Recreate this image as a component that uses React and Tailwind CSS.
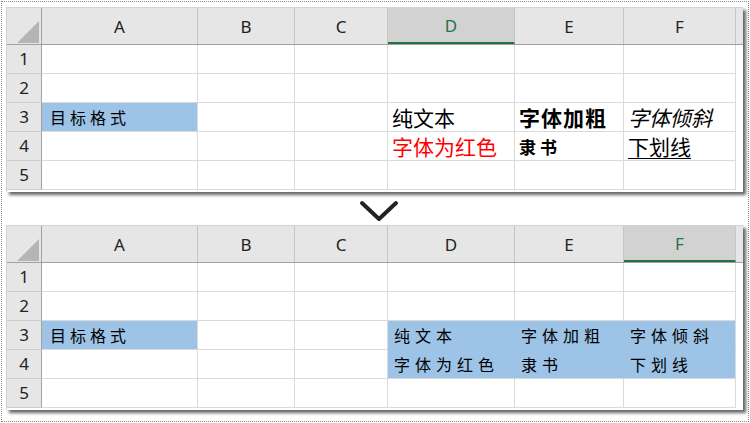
import React from "react";

const COLS = ["A", "B", "C", "D", "E", "F"];
const ROWS = [1, 2, 3, 4, 5];
const GRID = "grid grid-cols-[35px_156px_97px_93px_127px_109px_112px_1fr]";
const CJK = { fontFamily: '"Noto Sans CJK SC", sans-serif' };
const HEAD = { fontFamily: '"Noto Sans", "Liberation Sans", sans-serif' };

const beforeCells = {
  A3: { text: "目标格式", fill: true, cls: "pl-[8px] text-[16px] tracking-[4px] text-black" },
  D3: { text: "纯文本", cls: "pl-[4px] text-[21px] text-black" },
  D4: { text: "字体为红色", cls: "pl-[4px] text-[21px] text-[#ff0000]" },
  E3: { text: "字体加粗", cls: "pl-[4px] text-[21px] font-bold tracking-[1px] text-black" },
  E4: { text: "隶书", cls: "pl-[4px] text-[17px] font-semibold tracking-[4px] text-black" },
  F3: { text: "字体倾斜", cls: "pl-[4px] text-[21px] italic text-black" },
  F4: {
    text: "下划线",
    cls: "pl-[4px] text-[21px] text-black underline underline-offset-[3px] decoration-1",
  },
};

const kai = "pl-[6px] text-[16px] tracking-[5px] text-black";
const afterCells = {
  A3: { text: "目标格式", fill: true, cls: "pl-[8px] text-[16px] tracking-[4px] text-black" },
  D3: { text: "纯文本", fill: true, cls: kai },
  D4: { text: "字体为红色", fill: true, cls: kai },
  E3: { text: "字体加粗", fill: true, cls: kai },
  E4: { text: "隶书", fill: true, cls: kai },
  F3: { text: "字体倾斜", fill: true, cls: kai },
  F4: { text: "下划线", fill: true, cls: kai },
};

function Corner() {
  return (
    <div className="h-full bg-[#e6e6e6] border-r border-[#a3a3a3] flex items-end justify-end pr-[2px] pb-[1px]">
      <svg width="22" height="22" viewBox="0 0 22 22">
        <polygon points="22,0 22,22 0,22" fill="#b5b5b5" />
      </svg>
    </div>
  );
}

function Sheet({ selected, cells }) {
  return (
    <div className="ml-[4px] w-[737px] bg-white border-t border-l border-[#d4d4d4] shadow-[3px_3px_3px_rgba(0,0,0,0.6)] pb-[2px]">
      <div className={`${GRID} h-[37px] bg-[#e6e6e6] border-b border-[#a0a0a0]`}>
        <Corner />
        {COLS.map((c) =>
          c === selected ? (
            <div
              key={c}
              style={HEAD}
              className="flex items-center justify-center bg-[#d2d2d2] text-[#217346] text-[17px] border-r border-[#c6c6c6] border-b-2 border-b-[#217346] pt-[2px]"
            >
              {c}
            </div>
          ) : (
            <div
              key={c}
              style={HEAD}
              className="flex items-center justify-center text-[#222] text-[17px] border-r border-[#c6c6c6] pt-[2px]"
            >
              {c}
            </div>
          )
        )}
        <div className="bg-[#e6e6e6]" />
      </div>
      {ROWS.map((r) => (
        <div key={r} className={`${GRID} h-[29px]`}>
          <div
            style={HEAD}
            className="flex items-center justify-center bg-[#e6e6e6] text-[#222] text-[17px] border-r border-[#a3a3a3] border-b border-b-[#cdcdcd]"
          >
            {r}
          </div>
          {COLS.map((c) => {
            const cell = cells[c + r];
            const below = cells[c + (r + 1)];
            const right = cells[COLS[COLS.indexOf(c) + 1] + r];
            const fill = cell && cell.fill;
            const bb = fill && below && below.fill ? "border-b-[#9dc3e6]" : "border-b-[#dadada]";
            const br = fill && right && right.fill ? "border-r-[#9dc3e6]" : "border-r-[#dadada]";
            return (
              <div
                key={c}
                style={CJK}
                className={`flex items-center whitespace-nowrap leading-none border-r border-b ${bb} ${br} ${
                  fill ? "bg-[#9dc3e6]" : "bg-white"
                } ${cell ? cell.cls : ""}`}
              >
                {cell ? cell.text : ""}
              </div>
            );
          })}
          <div className="bg-white" />
        </div>
      ))}
    </div>
  );
}

export default function App() {
  return (
    <div className="w-[750px] h-[423px] p-px bg-white">
      <div className="h-full border border-dotted border-[#8c8c8c] pt-[5px]">
        <Sheet selected="D" cells={beforeCells} />
        <div className="h-[33px] flex items-center justify-center">
          <svg width="40" height="22" viewBox="0 0 40 22" className="ml-[7px] mt-[4px]">
            <polyline
              points="3,3 20,19 37,3"
              fill="none"
              stroke="#222"
              strokeWidth="4"
              strokeLinecap="round"
              strokeLinejoin="round"
            />
          </svg>
        </div>
        <Sheet selected="F" cells={afterCells} />
      </div>
    </div>
  );
}
